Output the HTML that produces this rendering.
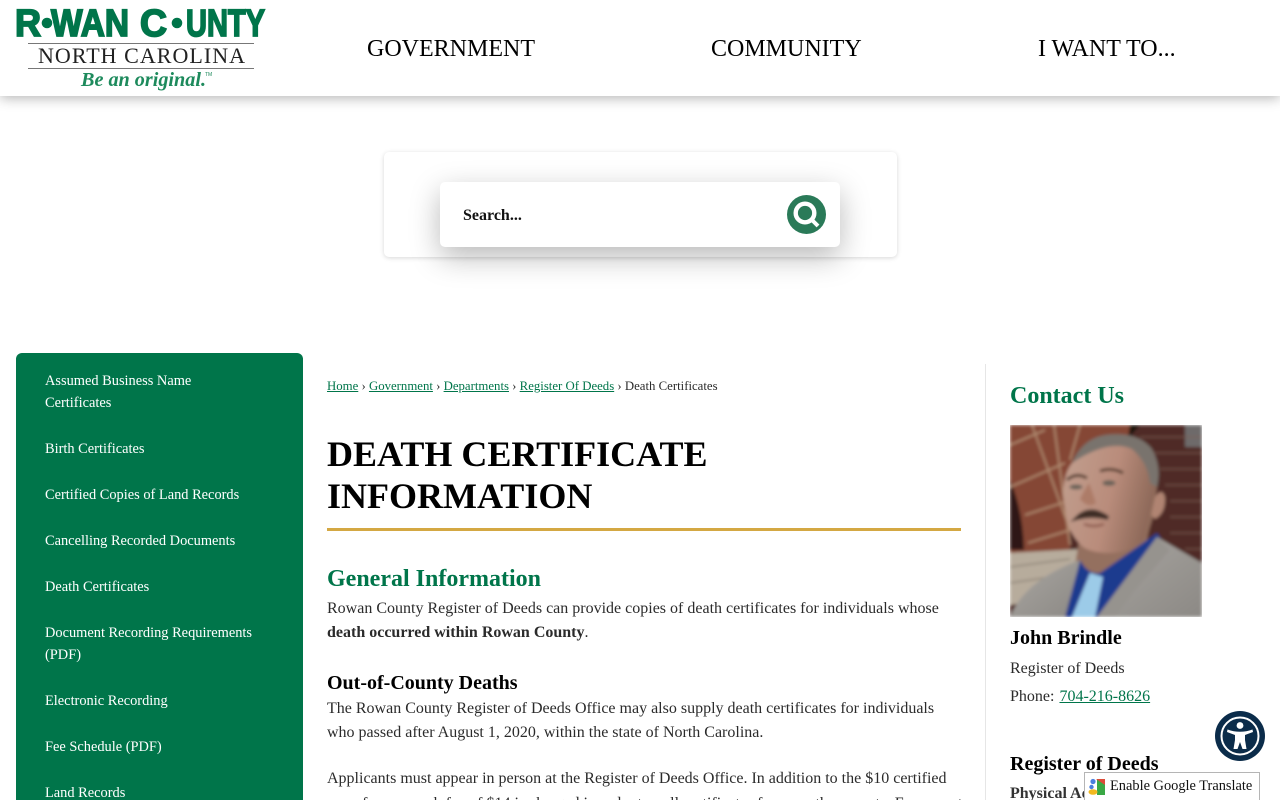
<!DOCTYPE html>
<html lang="en">
<head>
<meta charset="utf-8">
<title>Death Certificate Information</title>
<style>
html,body{margin:0;padding:0;background:#fff;width:1280px;height:800px;overflow:hidden;}
#w{position:relative;width:1280px;height:800px;overflow:hidden;font-family:"Liberation Serif",serif;color:#2b2b2b;}
.a{position:absolute;white-space:nowrap;}
a{color:#00754a;text-decoration:underline;}
#hdr{left:0;top:0;width:1280px;height:96px;background:#fff;box-shadow:0 2px 12px rgba(0,0,0,.3);z-index:2;}
.nav{top:35px;font-size:24px;line-height:28px;color:#000;}
#box{left:384px;top:152px;width:513px;height:105px;background:#fff;border-radius:5px;box-shadow:0 1px 5px rgba(0,0,0,.16);}
#inp{left:440px;top:182px;width:400px;height:65px;background:#fff;border-radius:5px;box-shadow:0 10px 30px rgba(0,0,0,.28);}
#side{left:16px;top:353px;width:287px;height:470px;background:#00754a;border-radius:6px 6px 0 0;}
.s{left:45px;font-size:14.4px;line-height:22px;color:#fff;}
.p{left:327px;font-size:16px;line-height:24px;color:#2b2b2b;}
.g{left:327px;font-size:24px;line-height:28px;font-weight:bold;color:#00754a;}
.h{left:327px;font-size:36px;line-height:43px;font-weight:bold;color:#000;}
</style>
</head>
<body>
<div id="w">
<div class="a" id="hdr">
<svg class="a" style="left:0;top:0" width="280" height="96" viewBox="0 0 280 96">
<g fill="#00754a" stroke="#00754a" stroke-width="1.8" font-family="'Liberation Sans',sans-serif" font-weight="bold" font-size="38">
<text x="15" y="36" textLength="26" lengthAdjust="spacingAndGlyphs">R</text>
<circle cx="47" cy="23" r="5.3" stroke="none"/>
<text x="51" y="36" textLength="78" lengthAdjust="spacingAndGlyphs">WAN</text>
<text x="140" y="36" textLength="27" lengthAdjust="spacingAndGlyphs">C</text>
<circle cx="177" cy="23" r="5.3" stroke="none"/>
<text x="186" y="36" textLength="79" lengthAdjust="spacingAndGlyphs">UNTY</text>
</g>
<rect x="28" y="43" width="226" height="1" fill="#777"/>
<text x="38" y="63" font-family="'Liberation Serif',serif" font-size="22" fill="#222" textLength="207" lengthAdjust="spacing">NORTH CAROLINA</text>
<rect x="28" y="68" width="226" height="1" fill="#777"/>
<text x="81" y="86" font-family="'Liberation Serif',serif" font-style="italic" font-weight="bold" font-size="20" fill="#1d8a5c" textLength="125" lengthAdjust="spacingAndGlyphs">Be an original.</text>
<text x="205" y="76" font-family="'Liberation Sans',sans-serif" font-size="5" fill="#1d8a5c">TM</text>
</svg>
<div class="a nav" style="left:367px">GOVERNMENT</div>
<div class="a nav" style="left:711px">COMMUNITY</div>
<div class="a nav" style="left:1038px">I WANT TO...</div>
</div>

<div class="a" id="box"></div>
<div class="a" id="inp"></div>
<div class="a" style="left:463px;top:206px;font-size:16px;line-height:20px;font-weight:bold;color:#111">Search...</div>
<svg class="a" style="left:786px;top:194px" width="41" height="41" viewBox="0 0 41 41">
<circle cx="20.5" cy="20.5" r="19.5" fill="#2a7a58"/>
<circle cx="19" cy="19" r="9.3" fill="none" stroke="#fff" stroke-width="4.4"/>
<path d="M26 26l6 6" stroke="#fff" stroke-width="4"/>
</svg>

<div class="a" id="side"></div>
<div class="a s" style="top:370px">Assumed Business Name<br>Certificates</div>
<div class="a s" style="top:438px">Birth Certificates</div>
<div class="a s" style="top:484px">Certified Copies of Land Records</div>
<div class="a s" style="top:530px">Cancelling Recorded Documents</div>
<div class="a s" style="top:576px">Death Certificates</div>
<div class="a s" style="top:622px">Document Recording Requirements<br>(PDF)</div>
<div class="a s" style="top:690px">Electronic Recording</div>
<div class="a s" style="top:736px">Fee Schedule (PDF)</div>
<div class="a s" style="top:782px">Land Records</div>

<div class="a" style="left:327px;top:378px;font-size:12.8px;line-height:16px;color:#2b2b2b"><a href="#">Home</a> › <a href="#">Government</a> › <a href="#">Departments</a> › <a href="#">Register Of Deeds</a> › Death Certificates</div>

<div class="a h" style="top:433px">DEATH CERTIFICATE</div>
<div class="a h" style="top:475px">INFORMATION</div>
<div class="a" style="left:327px;top:528px;width:634px;height:3px;background:#d4a843"></div>

<div class="a g" style="top:565px">General Information</div>
<div class="a p" style="top:597px">Rowan County Register of Deeds can provide copies of death certificates for individuals whose<br><b>death occurred within Rowan County</b>.</div>
<div class="a" style="left:327px;top:671px;font-size:20px;line-height:24px;font-weight:bold;color:#000">Out-of-County Deaths</div>
<div class="a p" style="top:697px">The Rowan County Register of Deeds Office may also supply death certificates for individuals<br>who passed after August 1, 2020, within the state of North Carolina.</div>
<div class="a p" style="top:767px">Applicants must appear in person at the Register of Deeds Office. In addition to the $10 certified</div>
<div class="a p" style="top:792px">copy fee, a search fee of $14 is charged in order to pull certificates from another county. For more t</div>

<div class="a" style="left:985px;top:364px;width:1px;height:436px;background:#e6e6e6"></div>
<div class="a g" style="left:1010px;top:382px">Contact Us</div>

<svg class="a" style="left:1010px;top:425px" width="192" height="192" viewBox="0 0 192 192">
<defs>
<filter id="b" x="-5%" y="-5%" width="110%" height="110%"><feGaussianBlur stdDeviation="1.5"/></filter>
<linearGradient id="face" x1="0" y1="0" x2="1" y2="0.3"><stop offset="0" stop-color="#c2a090"/><stop offset=".6" stop-color="#b98c7b"/><stop offset="1" stop-color="#8f6a5a"/></linearGradient>
<linearGradient id="suit" x1="0" y1="0" x2="1" y2="1"><stop offset="0" stop-color="#a9a6a1"/><stop offset="1" stop-color="#8c8985"/></linearGradient>
<clipPath id="c"><rect width="192" height="192"/></clipPath>
</defs>
<g clip-path="url(#c)"><g filter="url(#b)">
<rect width="192" height="192" fill="#4f2b25"/>
<path d="M0 0H125L118 12L60 40L60 128H0Z" fill="#854634"/>
<path d="M0 55Q13 85 14 125H0Z" fill="#2f1916"/>
<path d="M120 0H130L118 14Z" fill="#1a1210"/>
<rect x="175" y="0" width="17" height="22" fill="#6e6a6a"/>
<g stroke="#b08a70" stroke-width="1.8" fill="none">
<path d="M22 0L60 105M44 0L60 120M70 0L60 35M0 20L35 5M0 62L55 38M15 90L58 76M18 118L60 105"/>
</g>
<g stroke="#7f6055" stroke-width="1.2" fill="none" opacity=".75">
<path d="M130 12H192M135 28H192M150 44H192M155 60H192M160 76H192M160 92H192M160 108H192M175 124H192"/>
</g>
<path d="M0 128L72 124L72 170L0 180Z" fill="#b7ac9c"/>
<path d="M0 142L60 134M0 158L55 150" stroke="#8f8577" stroke-width="1.5"/>
<path d="M70 110L140 100L130 150L90 160L65 140Z" fill="#94705f"/>
<path d="M53 68Q54 48 62 38Q72 18 92 11Q125 8 140 24Q150 40 147 62L143 92L137 112Q120 128 100 128Q82 128 73 122Q60 110 57 95Z" fill="url(#face)"/>
<path d="M62 38Q72 14 95 10Q128 6 142 24Q152 42 147 62L140 58Q138 38 122 24Q98 14 62 38Z" fill="#79736d"/>
<path d="M145 72Q152 62 155 72Q156 88 145 94L141 90Z" fill="#b08472"/>
<path d="M57 55Q66 47 77 53M90 46Q102 42 113 48" stroke="#5a4033" stroke-width="3" fill="none"/>
<ellipse cx="66" cy="62" rx="6.5" ry="2.5" fill="#6b6258"/>
<ellipse cx="99" cy="58" rx="6.5" ry="2.8" fill="#6b6258"/>
<path d="M70 74Q76 62 79 58Q84 72 86 78Q78 84 70 74Z" fill="#ad7c68"/>
<path d="M67 93Q80 80 98 93Q82 89 67 93Z" fill="#3f2e27" stroke="#3f2e27" stroke-width="4"/>
<path d="M74 99Q84 103 94 99" stroke="#8f5b4f" stroke-width="2.5" fill="none"/>
<path d="M70 135Q78 150 90 148L147 108L155 120L100 192H55Z" fill="#1c3a8e"/>
<path d="M62 192L80 148L93 152L85 192Z" fill="#9ccbe8"/>
<path d="M0 192Q15 155 70 135L55 192Z" fill="url(#suit)"/>
<path d="M87 192L147 112L192 138V192Z" fill="url(#suit)"/>
<path d="M147 112L160 125L125 165L105 192H87Z" fill="#96938e"/>
</g></g>
</svg>

<div class="a" style="left:1010px;top:626px;font-size:20px;line-height:24px;font-weight:bold;color:#000">John Brindle</div>
<div class="a" style="left:1010px;top:659px;font-size:16px;line-height:20px;color:#2b2b2b">Register of Deeds</div>
<div class="a" style="left:1010px;top:687px;font-size:16px;line-height:20px;color:#2b2b2b">Phone: <a href="#" style="margin-left:1px">704-216-8626</a></div>
<div class="a" style="left:1010px;top:752px;font-size:20px;line-height:24px;font-weight:bold;color:#000">Register of Deeds</div>
<div class="a" style="left:1010px;top:784px;font-size:16px;line-height:20px;font-weight:bold;color:#333">Physical Address</div>

<svg class="a" style="left:1215px;top:711px;z-index:3" width="50" height="50" viewBox="0 0 50 50">
<circle cx="25" cy="25" r="25" fill="#0b2c4a"/>
<circle cx="25" cy="25" r="18.5" fill="none" stroke="#fff" stroke-width="2"/>
<circle cx="25" cy="14.5" r="3.4" fill="#fff"/>
<path d="M12.5 18.5Q25 23 37.5 18.5L38 21L30 24V29L31.5 38H27.5L25 31L22.5 38H18.5L20 29V24L12 21Z" fill="#fff"/>
</svg>

<div class="a" style="left:1084px;top:772px;width:174px;height:28px;background:#fff;border:1px solid #b5b5b5;border-bottom:0;z-index:3">
<svg class="a" style="left:3px;top:5px" width="18" height="18" viewBox="0 0 18 18">
<rect x="9" y="1" width="8" height="16" fill="#3aa845"/>
<path d="M8 1H17V7Z" fill="#dd4b39"/>
<circle cx="5" cy="3.5" r="2.6" fill="#4a7fe0"/>
<circle cx="3.5" cy="9" r="2.2" fill="#4a7fe0"/>
<ellipse cx="5" cy="14" rx="4.5" ry="2.8" fill="#f2b91f"/>
</svg>
<div class="a" style="left:25px;top:3px;font-size:14.4px;line-height:20px;color:#111">Enable Google Translate</div>
</div>
</div>
</body>
</html>
